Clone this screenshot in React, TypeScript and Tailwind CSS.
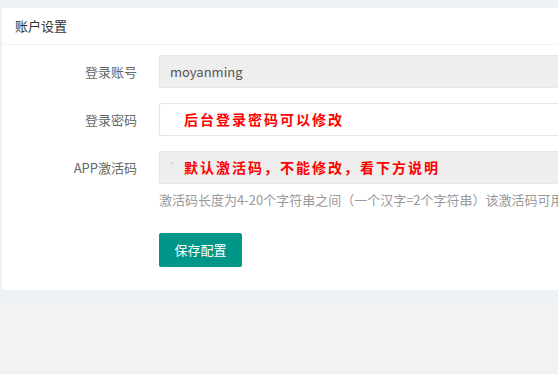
export default function App() {
  const font = { fontFamily: '"Noto Sans CJK SC", "Noto Sans", sans-serif' };
  return (
    <div className="w-[558px] h-[374px] overflow-hidden bg-[#f2f2f2]" style={font}>
      <div className="bg-[#eef2f5] pt-[8px] pb-[15px]">
        <div className="ml-[2px] w-[640px] bg-white rounded-[2px]">
          <div className="h-[37px] px-[13px] flex items-center border-b border-[#f2f2f2] text-[13px] text-[#333]">
            账户设置
          </div>
          <div className="pt-[10px] pb-[23px]">
            <div className="flex items-center h-[33px]">
              <div className="w-[157px] pr-[22px] text-right text-[13px] text-[#666]">登录账号</div>
              <div className="flex-1 h-[33px] flex items-center pl-[10px] bg-[#eeeeee] border border-[#e6e6e6] rounded-[2px] text-[13px] text-[#555]">
                moyanming
              </div>
            </div>
            <div className="flex items-center h-[33px] mt-[15px]">
              <div className="w-[157px] pr-[22px] text-right text-[13px] text-[#666]">登录密码</div>
              <div className="flex-1 h-[33px] flex items-center pl-[24px] bg-white border border-[#e6e6e6] rounded-[2px] text-[14px] font-bold tracking-[2px] text-[#ff0000]">
                后台登录密码可以修改
              </div>
            </div>
            <div className="flex items-center h-[33px] mt-[15px]">
              <div className="w-[157px] pr-[22px] text-right text-[13px] text-[#666]">APP激活码</div>
              <div className="flex-1 h-[33px] flex items-center pl-[11px] bg-[#eeeeee] border border-[#e6e6e6] rounded-[2px]">
                <span className="text-[9px] text-[#bbb] w-[13px] -mt-[4px]">'</span>
                <span className="text-[14px] font-bold tracking-[2px] text-[#ff0000]">默认激活码，不能修改，看下方说明</span>
              </div>
            </div>
            <div className="pl-[157px] mt-[7px] text-[13px] text-[#999] whitespace-nowrap leading-[18px] overflow-hidden">
              激活码长度为4-20个字符串之间（一个汉字=2个字符串）该激活码可用于
            </div>
            <div className="pl-[157px] mt-[24px]">
              <button className="h-[34px] w-[83px] bg-[#009688] text-white text-[13px] rounded-[2px]">保存配置</button>
            </div>
          </div>
        </div>
      </div>
    </div>
  );
}
